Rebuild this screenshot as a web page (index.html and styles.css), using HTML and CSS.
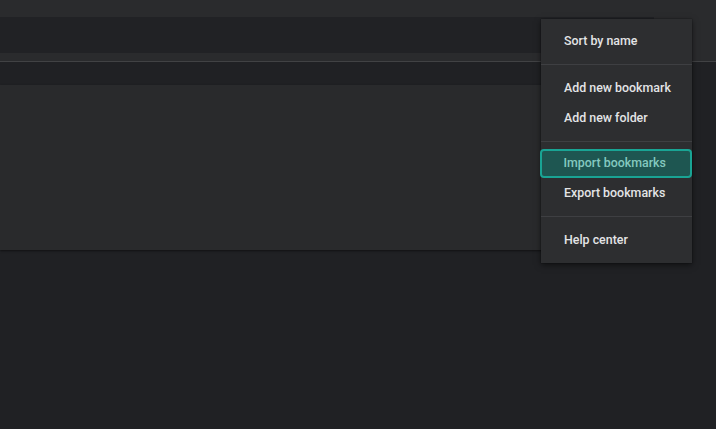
FILE: index.html
```html
<!DOCTYPE html>
<html lang="en">
<head>
<meta charset="utf-8">
<title>Bookmarks</title>
<link rel="stylesheet" href="styles.css">
</head>
<body>
<header class="toolbar">
  <div class="search"></div>
</header>
<main class="content">
  <section class="card"></section>
</main>
<div class="menu" role="menu">
  <div class="item" role="menuitem">Sort by name</div>
  <hr class="sep">
  <div class="item" role="menuitem">Add new bookmark</div>
  <div class="item" role="menuitem">Add new folder</div>
  <hr class="sep">
  <div class="item focused" role="menuitem">Import bookmarks</div>
  <div class="item" role="menuitem">Export bookmarks</div>
  <hr class="sep">
  <div class="item" role="menuitem">Help center</div>
</div>
</body>
</html>
```
FILE: styles.css
```css
html, body {
  margin: 0;
  padding: 0;
}
body {
  background: #202124;
  width: 716px;
  height: 429px;
  overflow: hidden;
  position: relative;
  font-family: Roboto, "Liberation Sans", Arial, sans-serif;
}
.toolbar {
  background: #2a2b2d;
  border-bottom: 1px solid #414244;
  padding-top: 17px;
  box-sizing: border-box;
  height: 62px;
}
.search {
  width: 654px;
  height: 36px;
  background: #212225;
}
.content {
  padding-top: 23px;
}
.card {
  width: 670px;
  height: 165px;
  background: #292a2c;
  box-shadow: 0 1px 2px rgba(0,0,0,0.5);
}
.menu {
  position: absolute;
  left: 541px;
  top: 19px;
  width: 151px;
  background: #2d2e30;
  padding: 7px 0 8px;
  box-shadow: 0 2px 6px rgba(0,0,0,0.55), 0 0 1px rgba(0,0,0,0.6);
}
.item {
  height: 30px;
  line-height: 30px;
  padding-left: 23px;
  font-size: 12.4px;
  font-weight: 500;
  color: #e3e4e6;
  white-space: nowrap;
  box-sizing: border-box;
}
.item.focused {
  margin: -1px 0 0 -1px;
  background: #1e5651;
  color: #84c9bf;
  border: 2.5px solid #19a494;
  border-radius: 4px;
  line-height: 24px;
  padding-left: 21.5px;
  height: 29px;
}
.sep {
  border: 0;
  height: 1px;
  background: #3e3f42;
  margin: 8px 0 8px;
}
```
